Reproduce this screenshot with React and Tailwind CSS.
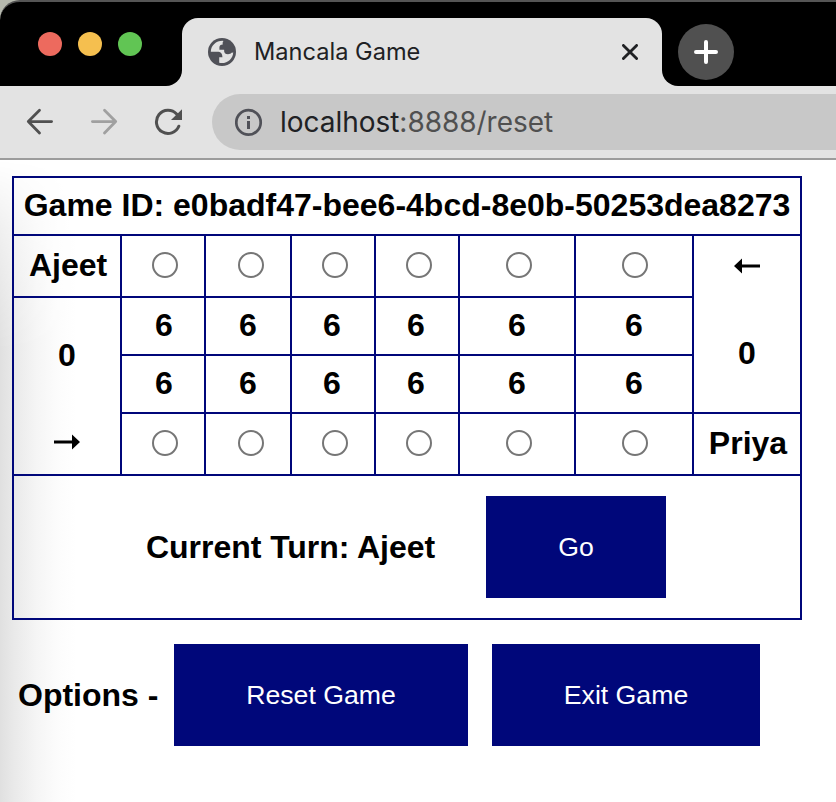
const cell = "flex items-center justify-center border-r-2 border-b-2 border-[#00077a]";

const pits = [
  { radio: "left-[2px]", seeds: "left-px" },
  { radio: "left-[3px]", seeds: "left-0" },
  { radio: "left-[2px]", seeds: "-left-px" },
  { radio: "left-[2px]", seeds: "-left-px" },
  { radio: "left-[2px]", seeds: "left-0" },
  { radio: "left-px", seeds: "left-0" },
];

function RadioRow() {
  return pits.map((pit, i) => (
    <div key={i} className={cell}>
      <input
        type="radio"
        className={`relative -top-px m-0 size-[26px] appearance-none rounded-full border-2 border-[#767676] bg-white ${pit.radio}`}
      />
    </div>
  ));
}

function SeedRow() {
  return pits.map((pit, i) => (
    <div key={i} className={cell}>
      <span className={`relative -top-px ${pit.seeds}`}>6</span>
    </div>
  ));
}

function Arrow({ className }) {
  return (
    <svg className={`h-4 w-[26px] ${className}`} viewBox="0 0 26 16">
      <path d="M0 8 8 0.6V6.4H26V9.6H8V15.4Z" fill="#000" />
    </svg>
  );
}

function Navy({ children, className }) {
  return (
    <button className={`h-[102px] bg-[#00077a] text-[26.67px] leading-none font-normal text-white ${className}`}>
      {children}
    </button>
  );
}

function TabBar() {
  return (
    <div className="flex h-[86px] rounded-tl-[20px] border-t-2 border-[#555] bg-black">
      <div className="flex w-[166px] items-start gap-4 pt-[30px] pl-[38px]">
        <span className="size-6 rounded-full bg-[#ed6a5e]" />
        <span className="size-6 rounded-full bg-[#f5bf4f]" />
        <span className="size-6 rounded-full bg-[#61c554]" />
      </div>
      <div className="mt-auto size-4 bg-[#e3e3e3]">
        <div className="size-4 rounded-br-2xl bg-black" />
      </div>
      <div className="mt-4 flex w-[480px] rounded-t-2xl bg-[#e3e3e3] pt-5 pl-[26px]">
        <svg className="size-7 shrink-0" viewBox="0 0 28 28">
          <circle cx="14" cy="14" r="14" fill="#505158" />
          <path
            d="M14.5 2.8C8 2.8 3 7.5 2.8 13.8H9.3C12.8 13.8 14.4 15.6 14.4 19.3H11.2V24.8C18.5 26.4 25.2 21 25.2 14.2C24.6 14.6 24 14.8 23.4 14.8C22.8 15.8 21.6 16.2 20 16.2C17.2 16.2 15.9 14.7 16.1 11.7H11.4V9.4C11.4 7.4 12.6 6.4 14.8 6.4C14.5 5 14.6 3.8 15.5 2.9Z"
            fill="#e3e3e3"
          />
        </svg>
        <span className="ml-[18px] w-[368px] font-[Inter] text-[23.6px] leading-7 whitespace-nowrap text-[#202124]">
          Mancala Game
        </span>
        <svg className="mt-[6px] size-4 shrink-0" viewBox="0 0 16 16">
          <path d="M1.4 1.4 14.6 14.6M14.6 1.4 1.4 14.6" stroke="#202124" strokeWidth="2.8" strokeLinecap="round" />
        </svg>
      </div>
      <div className="mt-auto size-4 bg-[#e3e3e3]">
        <div className="size-4 rounded-bl-2xl bg-black" />
      </div>
      <div className="mt-[22px] flex size-14 items-center justify-center rounded-full bg-[#505050]">
        <svg className="size-6" viewBox="0 0 24 24">
          <path d="M12 2V22M2 12H22" stroke="#fff" strokeWidth="4" strokeLinecap="round" />
        </svg>
      </div>
    </div>
  );
}

function Toolbar() {
  return (
    <div className="flex h-[74px] border-b-2 border-[#9c9c9c] bg-[#e3e3e3] pt-2">
      <svg className="mt-[14px] ml-[26px] size-7" viewBox="0 0 28 28" fill="none" stroke="#505050" strokeWidth="2.8" strokeLinecap="round" strokeLinejoin="round">
        <path d="M13.5 2.3 2.3 13.6 13.5 25M2.3 13.6H25.6" />
      </svg>
      <svg className="mt-[14px] ml-9 size-7" viewBox="0 0 28 28" fill="none" stroke="#a0a0a0" strokeWidth="2.8" strokeLinecap="round" strokeLinejoin="round">
        <path d="M14.5 2.3 25.7 13.6 14.5 25M25.7 13.6H2.4" />
      </svg>
      <svg className="mt-[14px] ml-9 size-7" viewBox="0 0 28 28" fill="none">
        <path d="M24.8 18.2A11.6 11.6 0 1 1 22.6 6" stroke="#505050" strokeWidth="3" strokeLinecap="round" />
        <path d="M28.2 1V12H17Z" fill="#505050" />
      </svg>
      <div className="ml-[30px] flex h-14 grow items-center rounded-l-full bg-[#c8c8c8] pl-[23px]">
        <svg className="size-7 shrink-0" viewBox="0 0 28 28">
          <circle cx="13.5" cy="14.4" r="12.2" fill="none" stroke="#505158" strokeWidth="2.7" />
          <path d="M12 8H15V11H12ZM12 13H15V21H12Z" fill="#505158" />
        </svg>
        <span className="ml-[17px] font-[Inter] text-[28px] leading-none tracking-[-0.03px] whitespace-nowrap text-[#505050]">
          <span className="text-[#202124]">localhost</span>:8888/reset
        </span>
      </div>
    </div>
  );
}

export default function App() {
  return (
    <div className="h-[802px] w-[836px] overflow-hidden bg-white">
      <div className="bg-[#b5b8ad]">
        <TabBar />
      </div>
      <Toolbar />
      <main className="relative h-[642px] pt-4 pl-3 font-['Liberation_Sans',Arial,sans-serif] text-[32px] leading-none font-bold text-black">
        <div className="absolute top-0 left-0 h-full w-[76px] bg-[linear-gradient(to_right,#e0e0e0,#e9e9e9_18%,#f5f5f5_48%,#fcfcfc_75%,#ffffff)] [mask-image:linear-gradient(to_bottom,transparent,rgba(0,0,0,0.5)_70px,black_190px)]" />
        <div className="relative grid w-[790px] grid-cols-[108px_84px_86px_84px_84px_116px_118px_108px] grid-rows-[58px_62px_58px_58px_62px_144px] border-t-2 border-l-2 border-[#00077a]">
          <div className={`${cell} col-span-8 pb-[2px] whitespace-nowrap`}>Game ID: e0badf47-bee6-4bcd-8e0b-50253dea8273</div>
          <div className={`${cell} pb-[2px] pl-[2px]`}>Ajeet</div>
          <RadioRow />
          <div className={`${cell} row-span-3 flex-col justify-start pt-[22px]`}>
            <Arrow />
            <span className="mt-[63px]">0</span>
          </div>
          <div className={`${cell} row-span-3 flex-col justify-start pt-[41px]`}>
            <span>0</span>
            <Arrow className="mt-[63px] rotate-180" />
          </div>
          <SeedRow />
          <SeedRow />
          <RadioRow />
          <div className={`${cell} pb-[2px] pl-[2px]`}>Priya</div>
          <div className={`${cell} col-span-8 justify-start pl-[132px]`}>
            <span className="w-[340px] tracking-[-0.04px] whitespace-nowrap">Current Turn: Ajeet</span>
            <Navy className="w-[180px]">Go</Navy>
          </div>
        </div>
        <div className="relative mt-6 flex items-center pl-[6px]">
          <span className="w-[156px] whitespace-nowrap">Options -</span>
          <Navy className="w-[294px]">Reset Game</Navy>
          <Navy className="ml-6 w-[268px]">Exit Game</Navy>
        </div>
      </main>
    </div>
  );
}
